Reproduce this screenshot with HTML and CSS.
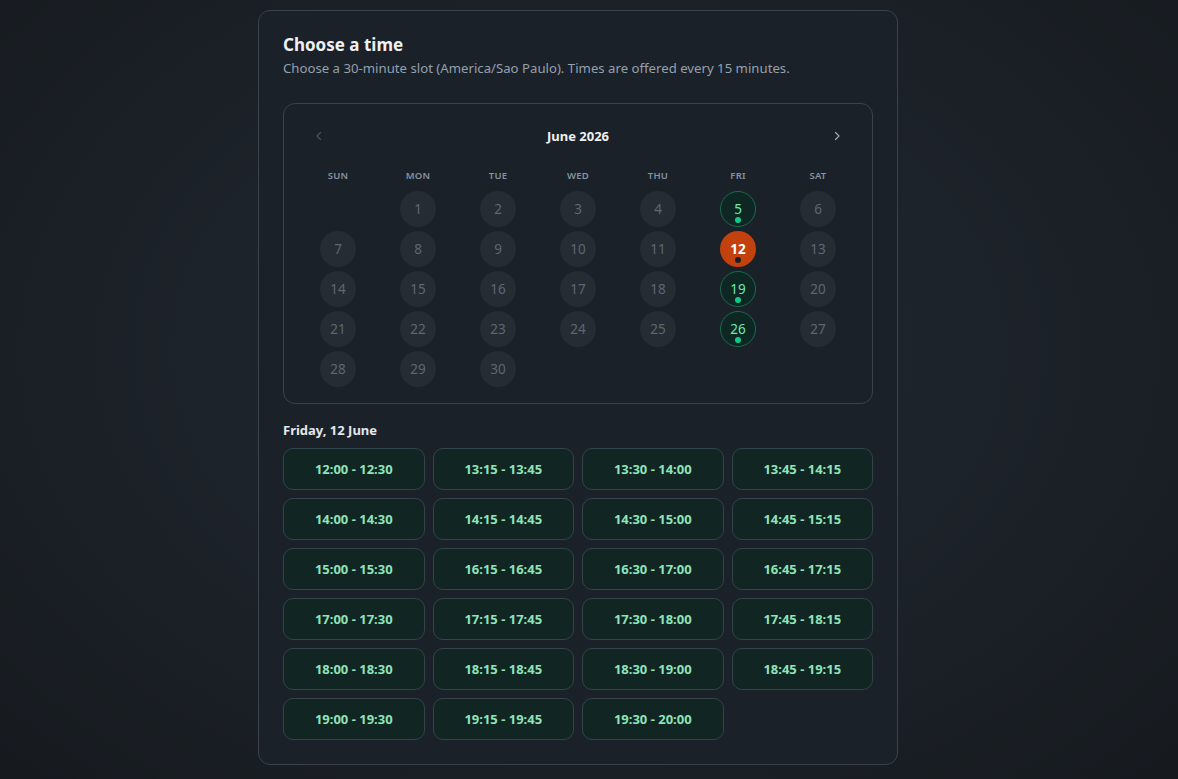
FILE: index.html
```
<!DOCTYPE html>
<html lang="en">
<head>
    <meta charset="UTF-8">
    <meta name="viewport" content="width=device-width, initial-scale=1.0">
    <title>Choose a time</title>
    <link rel="stylesheet" href="styles.css">
</head>
<body>
    <div class="card">
        <h1 class="title">Choose a time</h1>
        <p class="subtitle">Choose a 30-minute slot (America/Sao Paulo). Times are offered every 15 minutes.</p>

        <div class="calendar">
            <div class="cal-header">
                <button class="nav-btn disabled" type="button">
                    <svg width="12" height="12" viewBox="0 0 12 12"><path d="M7.5 2.5 4 6l3.5 3.5" fill="none" stroke="currentColor" stroke-width="1.3" stroke-linecap="round" stroke-linejoin="round"/></svg>
                </button>
                <div class="month">June 2026</div>
                <button class="nav-btn" type="button">
                    <svg width="12" height="12" viewBox="0 0 12 12"><path d="M4.5 2.5 8 6l-3.5 3.5" fill="none" stroke="currentColor" stroke-width="1.3" stroke-linecap="round" stroke-linejoin="round"/></svg>
                </button>
            </div>
            <div class="cal-grid">
                <div class="dow">SUN</div>
                <div class="dow">MON</div>
                <div class="dow">TUE</div>
                <div class="dow">WED</div>
                <div class="dow">THU</div>
                <div class="dow">FRI</div>
                <div class="dow">SAT</div>

                <div class="cell"></div>
                <div class="cell"><span class="day">1</span></div>
                <div class="cell"><span class="day">2</span></div>
                <div class="cell"><span class="day">3</span></div>
                <div class="cell"><span class="day">4</span></div>
                <div class="cell"><span class="day open">5</span></div>
                <div class="cell"><span class="day">6</span></div>

                <div class="cell"><span class="day">7</span></div>
                <div class="cell"><span class="day">8</span></div>
                <div class="cell"><span class="day">9</span></div>
                <div class="cell"><span class="day">10</span></div>
                <div class="cell"><span class="day">11</span></div>
                <div class="cell"><span class="day selected">12</span></div>
                <div class="cell"><span class="day">13</span></div>

                <div class="cell"><span class="day">14</span></div>
                <div class="cell"><span class="day">15</span></div>
                <div class="cell"><span class="day">16</span></div>
                <div class="cell"><span class="day">17</span></div>
                <div class="cell"><span class="day">18</span></div>
                <div class="cell"><span class="day open">19</span></div>
                <div class="cell"><span class="day">20</span></div>

                <div class="cell"><span class="day">21</span></div>
                <div class="cell"><span class="day">22</span></div>
                <div class="cell"><span class="day">23</span></div>
                <div class="cell"><span class="day">24</span></div>
                <div class="cell"><span class="day">25</span></div>
                <div class="cell"><span class="day open">26</span></div>
                <div class="cell"><span class="day">27</span></div>

                <div class="cell"><span class="day">28</span></div>
                <div class="cell"><span class="day">29</span></div>
                <div class="cell"><span class="day">30</span></div>
            </div>
        </div>

        <div class="day-label">Friday, 12 June</div>
        <div class="slots">
            <button class="slot" type="button">12:00 - 12:30</button>
            <button class="slot" type="button">13:15 - 13:45</button>
            <button class="slot" type="button">13:30 - 14:00</button>
            <button class="slot" type="button">13:45 - 14:15</button>
            <button class="slot" type="button">14:00 - 14:30</button>
            <button class="slot" type="button">14:15 - 14:45</button>
            <button class="slot" type="button">14:30 - 15:00</button>
            <button class="slot" type="button">14:45 - 15:15</button>
            <button class="slot" type="button">15:00 - 15:30</button>
            <button class="slot" type="button">16:15 - 16:45</button>
            <button class="slot" type="button">16:30 - 17:00</button>
            <button class="slot" type="button">16:45 - 17:15</button>
            <button class="slot" type="button">17:00 - 17:30</button>
            <button class="slot" type="button">17:15 - 17:45</button>
            <button class="slot" type="button">17:30 - 18:00</button>
            <button class="slot" type="button">17:45 - 18:15</button>
            <button class="slot" type="button">18:00 - 18:30</button>
            <button class="slot" type="button">18:15 - 18:45</button>
            <button class="slot" type="button">18:30 - 19:00</button>
            <button class="slot" type="button">18:45 - 19:15</button>
            <button class="slot" type="button">19:00 - 19:30</button>
            <button class="slot" type="button">19:15 - 19:45</button>
            <button class="slot" type="button">19:30 - 20:00</button>
        </div>
    </div>
</body>
</html>
```

FILE: styles.css
```
html, body {
    height: 100%;
}
body {
    margin: 0;
    padding-right: 22px; /* card sits a little left of centre */
    font-family: 'Noto Sans', 'Open Sans', sans-serif;
    color: #e5e7eb;
    background: radial-gradient(ellipse at 50% 45%, #222831 0%, #1d232a 45%, #161a1f 100%);
    overflow: hidden;
}
.card {
    box-sizing: border-box;
    width: 640px;
    margin: 10px auto 0;
    padding: 22px 24px 24px;
    background: #1b2129;
    border: 1px solid #3a424c;
    border-radius: 12px;
}
.title {
    margin: 0;
    font-size: 17px;
    font-weight: 700;
    line-height: 24px;
    color: #eef0f3;
}
.subtitle {
    margin: 1px 0 0;
    font-size: 13.2px;
    line-height: 20px;
    color: #94a0ae;
}

/* calendar */
.calendar {
    margin-top: 25px;
    padding: 14px 14px 14px;
    border: 1px solid #3a424c;
    border-radius: 12px;
}
.cal-header {
    display: flex;
    align-items: center;
    justify-content: space-between;
    padding: 0 14px;
    height: 36px;
}
.month {
    font-size: 13px;
    font-weight: 700;
    color: #eef0f3;
}
.nav-btn {
    width: 14px;
    height: 14px;
    padding: 0;
    display: flex;
    align-items: center;
    justify-content: center;
    background: none;
    border: none;
    color: #9aa4b0;
    cursor: pointer;
}
.nav-btn.disabled {
    color: #4a525d;
}
.cal-grid {
    display: grid;
    grid-template-columns: repeat(7, 80px);
    grid-template-rows: 28px;
    grid-auto-rows: 40px;
    margin-top: 7px;
}
.dow {
    display: flex;
    align-items: center;
    justify-content: center;
    font-size: 9.5px;
    font-weight: 600;
    color: #8793a0;
    letter-spacing: 0.2px;
}
.cell {
    display: flex;
    align-items: center;
    justify-content: center;
}
.day {
    position: relative;
    box-sizing: border-box;
    width: 36px;
    height: 36px;
    border-radius: 50%;
    display: flex;
    align-items: center;
    justify-content: center;
    background: #262c34;
    color: #5d6773;
    font-size: 13.5px;
}
.day.open {
    background: #0e2722;
    border: 1px solid #1a6b50;
    color: #6ee7b7;
}
.day.selected {
    background: #c2410c;
    color: #ffffff;
    font-weight: 700;
}
.day.open::after, .day.selected::after {
    content: "";
    position: absolute;
    left: 50%;
    bottom: 4px;
    width: 6px;
    height: 6px;
    margin-left: -3px;
    border-radius: 50%;
    background: #10c98a;
}
.day.open::after {
    bottom: 3px;
}
.day.selected::after {
    background: #1b1f24;
}

/* slots */
.day-label {
    margin-top: 18px;
    font-size: 13px;
    font-weight: 700;
    line-height: 16px;
    color: #e5e7eb;
}
.slots {
    margin-top: 10px;
    display: grid;
    grid-template-columns: repeat(4, 1fr);
    gap: 8px;
}
.slot {
    height: 42px;
    padding: 0;
    background: #112523;
    border: 1px solid #34434a;
    border-radius: 10px;
    color: #8fe3b9;
    font-family: inherit;
    font-size: 13px;
    font-weight: 700;
    cursor: pointer;
}
```
